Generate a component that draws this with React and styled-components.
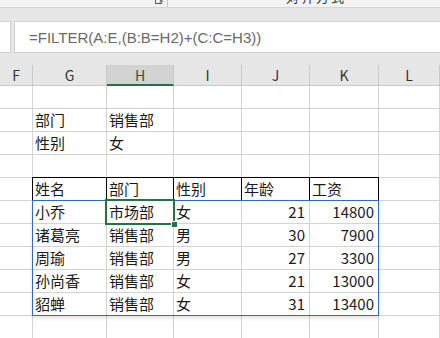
import styled, { createGlobalStyle } from "styled-components";

const GlobalStyle = createGlobalStyle`
  html, body {
    margin: 0;
    padding: 0;
    background: #ffffff;
    overflow: hidden;
  }
`;

const COLS = ["F", "G", "H", "I", "J", "K", "L"];
const COL_WIDTHS = [33, 74, 67, 68, 68, 69];
const HEADER_H = 21;
const ROW_H = 23;

const ROWS = [
  [],
  ["", "部门", "销售部"],
  ["", "性别", "女"],
  [],
  ["", "姓名", "部门", "性别", "年龄", "工资"],
  ["", "小乔", "市场部", "女", 21, 14800],
  ["", "诸葛亮", "销售部", "男", 30, 7900],
  ["", "周瑜", "销售部", "男", 27, 3300],
  ["", "孙尚香", "销售部", "女", 21, 13000],
  ["", "貂蝉", "销售部", "女", 31, 13400],
  [],
];

const Page = styled.div`
  width: 440px;
  height: 338px;
  overflow: hidden;
  display: flex;
  flex-direction: column;
  font-family: "Noto Sans CJK SC", "Noto Sans", sans-serif;
`;

// ribbon bottom edge, cut off by the window top
const Ribbon = styled.div`
  height: 7px;
  flex: none;
  background: #f3f3f3;
  border-bottom: 1px solid #d6d6d6;
  display: flex;
  align-items: flex-end;
  overflow: hidden;
`;

const Launcher = styled.svg`
  margin-left: 155px;
  margin-bottom: 3px;
  flex: none;
`;

const GroupDivider = styled.div`
  width: 1px;
  height: 7px;
  margin-left: 3px;
  background: #c8c8c8;
  align-self: flex-start;
`;

const GroupLabel = styled.span`
  margin-left: 118px;
  margin-bottom: 4px;
  font-size: 13px;
  line-height: 13px;
  letter-spacing: 2px;
  color: #333;
  white-space: nowrap;
`;

const FormulaArea = styled.div`
  flex: none;
  background: #e6e6e6;
  padding: 13px 0 12px;
  display: flex;
  gap: 3px;
`;

const NameBox = styled.div`
  width: 11px;
  height: 32px;
  box-sizing: border-box;
  background: #fff;
  border: 1px solid #d0d0d0;
  border-left: none;
`;

const FormulaInput = styled.div`
  flex: 1;
  height: 32px;
  box-sizing: border-box;
  background: #fff;
  border: 1px solid #d0d0d0;
  border-right: none;
  padding-left: 14px;
  display: flex;
  align-items: center;
  font-family: "Liberation Sans", Arial, sans-serif;
  font-size: 15px;
  color: #6a6a6a;
  white-space: nowrap;
`;

const Sheet = styled.div`
  position: relative;
  display: grid;
  grid-template-columns: ${COL_WIDTHS.map((w) => w + "px").join(" ")} 1fr;
  grid-template-rows: ${HEADER_H}px repeat(${ROWS.length}, ${ROW_H}px);
  background: #fff;
`;

const ColHeader = styled.div`
  box-sizing: border-box;
  background: ${(p) => (p.$active ? "#d3d3d3" : "#e6e6e6")};
  border-right: 1px solid #cacaca;
  border-bottom: ${(p) => (p.$active ? "2px solid #217346" : "1px solid #cacaca")};
  display: flex;
  align-items: center;
  justify-content: center;
  font-size: 14px;
  color: ${(p) => (p.$active ? "#1e5e37" : "#333")};
`;

const Cell = styled.div`
  box-sizing: border-box;
  border-right: 1px solid ${(p) => (p.$boxed ? "#000" : "#d4d4d4")};
  border-bottom: 1px solid ${(p) => (p.$boxed ? "#000" : "#d4d4d4")};
  box-shadow: ${(p) =>
    p.$boxed
      ? p.$first
        ? "0 -1px 0 #000, -1px 0 0 #000, -1px -1px 0 #000"
        : "0 -1px 0 #000"
      : "none"};
  padding: ${(p) => (p.$number ? "0 4px 0 0" : "0 0 0 2px")};
  display: flex;
  align-items: center;
  justify-content: ${(p) => (p.$number ? "flex-end" : "flex-start")};
  font-size: 15px;
  line-height: 22px;
  color: #1a1a1a;
  white-space: nowrap;
  overflow: hidden;
`;

const SpillRange = styled.div`
  position: absolute;
  box-sizing: border-box;
  border: 1px solid #3367c2;
  box-shadow: 0 2px 4px rgba(0, 0, 0, 0.12);
  pointer-events: none;
`;

const ActiveCell = styled.div`
  position: absolute;
  box-sizing: border-box;
  border: 2px solid #217346;
  pointer-events: none;
`;

const FillHandle = styled.div`
  position: absolute;
  right: -5px;
  bottom: -5px;
  width: 5px;
  height: 5px;
  background: #217346;
  border: 1px solid #fff;
`;

const colLeft = (i) => COL_WIDTHS.slice(0, i).reduce((a, b) => a + b, 0);
const rowTop = (r) => HEADER_H + r * ROW_H;

export default function App() {
  const spill = {
    left: colLeft(1) - 1,
    top: rowTop(5) - 1,
    width: colLeft(6) - colLeft(1) + 1,
    height: ROW_H * 5 + 1,
  };
  const active = {
    left: colLeft(2) - 2,
    top: rowTop(5) - 2,
    width: COL_WIDTHS[2] + 3,
    height: ROW_H + 3,
  };

  return (
    <Page>
      <GlobalStyle />
      <Ribbon>
        <Launcher width="9" height="9" viewBox="0 0 9 9">
          <path d="M0.5 2v6.5H7" fill="none" stroke="#555" strokeWidth="1" />
          <path d="M3 3l4 4M4.5 7H7V4.5" fill="none" stroke="#555" strokeWidth="1" />
        </Launcher>
        <GroupDivider />
        <GroupLabel>对齐方式</GroupLabel>
      </Ribbon>
      <FormulaArea>
        <NameBox />
        <FormulaInput>=FILTER(A:E,(B:B=H2)+(C:C=H3))</FormulaInput>
      </FormulaArea>
      <Sheet>
        {COLS.map((c) => (
          <ColHeader key={c} $active={c === "H"}>
            {c}
          </ColHeader>
        ))}
        {ROWS.map((row, r) =>
          COLS.map((c, ci) => {
            const v = row[ci];
            const boxed = r === 4 && ci >= 1 && ci <= 5;
            return (
              <Cell
                key={`${r}-${c}`}
                $number={typeof v === "number"}
                $boxed={boxed}
                $first={boxed && ci === 1}
              >
                {v}
              </Cell>
            );
          })
        )}
        <SpillRange style={spill} />
        <ActiveCell style={active}>
          <FillHandle />
        </ActiveCell>
      </Sheet>
    </Page>
  );
}
